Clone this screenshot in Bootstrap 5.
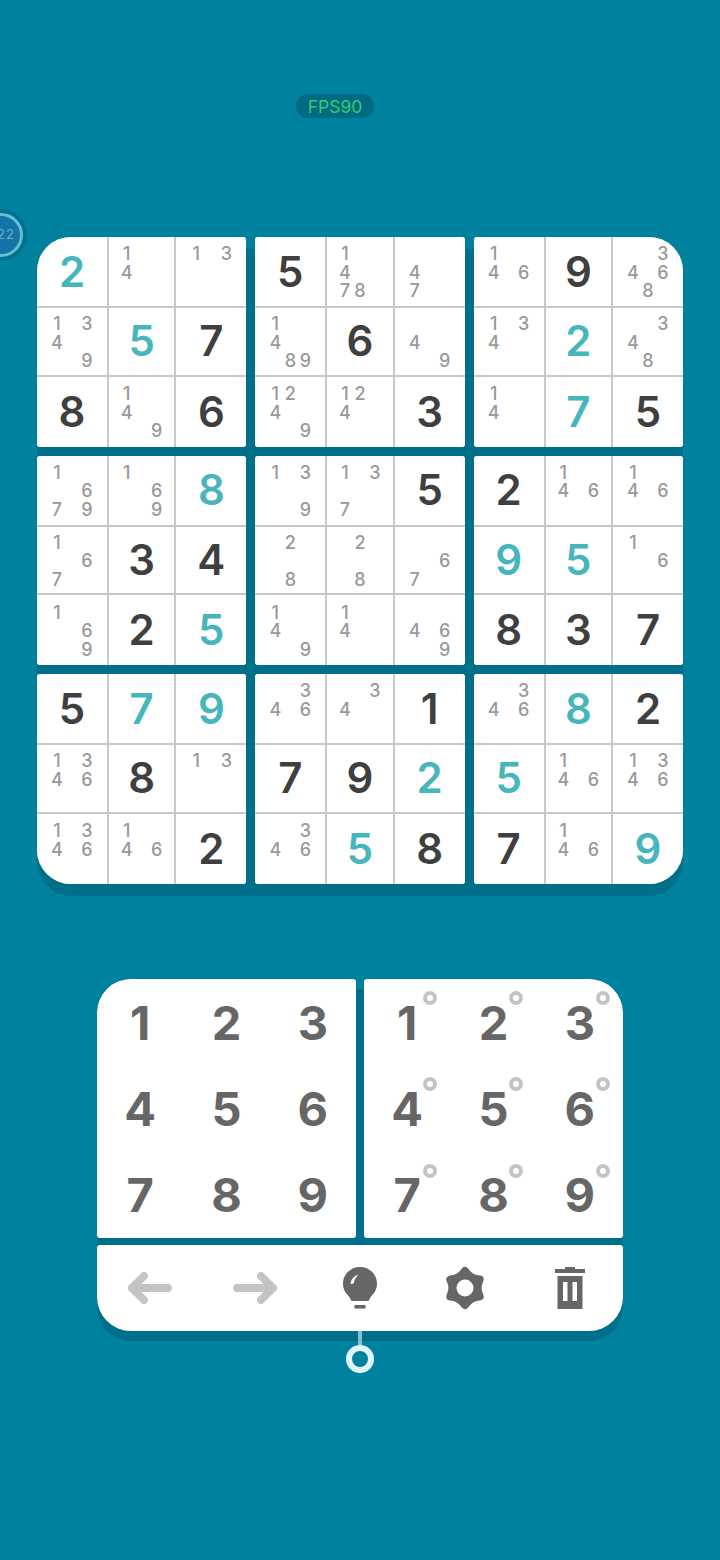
<!DOCTYPE html>
<html lang="en">
<head>
    <meta charset="UTF-8">
    <meta name="viewport" content="width=device-width, initial-scale=1.0">
    <title>Sudoku</title>
    <link href="https://cdn.jsdelivr.net/npm/bootstrap@5.3.0/dist/css/bootstrap.min.css" rel="stylesheet">
    <style>
        body { background: #00829f; font-family: Inter, "Liberation Sans", sans-serif; width: 720px; height: 1560px; overflow: hidden; }
        .fps-pill { margin: 94px 0 0 296px; width: 78px; height: 24px; border-radius: 12px; background: #006a83; color: #33cc6c; font-size: 17.5px; line-height: 26px; text-align: center; }
        .timer { left: -25px; top: 209px; width: 52px; height: 52px; border-radius: 50%; background: #00728d; }
        .timer-in { width: 44px; height: 44px; padding-left: 10px; border-radius: 50%; background: #1474a8; border: 3px solid #69bcd6; color: #6cb0cc; font-size: 13px; letter-spacing: 1px; }
        .board-wrap { margin: 119px 37px 0; }
        .under { position: absolute; left: 0; right: 0; top: 12px; bottom: -12px; background: #00708a; border-radius: 34px; }
        .sudoku { display: grid; grid-template-columns: repeat(3, 1fr); gap: 9px; }
        .house { display: grid; grid-template-columns: 70px 1fr 70px; grid-template-rows: 69px 1fr 70px; height: 209.5px; gap: 2px; background: #c8c8c8; border-radius: 3px; overflow: hidden; }
        .house.tl { border-top-left-radius: 34px; }
        .house.tr { border-top-right-radius: 34px; }
        .house.bl { border-bottom-left-radius: 34px; }
        .house.br { border-bottom-right-radius: 34px; }
        .cell { background: #fff; color: #3f3f3f; font-size: 42px; font-weight: 600; line-height: 1; }
        .cell.given { color: #47b6bc; }
        .notes { display: grid; grid-template-columns: repeat(3, 15px); grid-template-rows: repeat(3, 18.5px); padding-top: 3px; color: #999; font-size: 18px; font-weight: 500; line-height: 18.5px; text-align: center; }
        .pad-wrap { width: 526px; margin: 95.5px auto 0; }
        .pad-wrap .under { top: 10px; bottom: -10px; }
        .pads { display: flex; gap: 8px; }
        .pad { flex: 1; height: 259px; display: grid; grid-template-columns: repeat(3, 1fr); grid-template-rows: repeat(3, 1fr); background: #fff; border-radius: 3px; color: #666; font-size: 47px; font-weight: 700; line-height: 1; }
        .pad.left { border-top-left-radius: 34px; }
        .pad.right { border-top-right-radius: 34px; }
        .dot { position: absolute; left: calc(50% + 16px); top: calc(50% - 31px); width: 14px; height: 14px; border: 4px solid #c4c4c4; border-radius: 50%; }
        .tools { margin-top: 7px; height: 86px; background: #fff; border-radius: 3px 3px 34px 34px; }
        .tool { flex: 1 1 0; }
        .stem { width: 4px; height: 15px; background: #84c3d3; }
        .knob { width: 28px; height: 28px; border: 6px solid #e0f5f7; border-radius: 50%; margin-top: -1px; }
    </style>
</head>
<body>
<!-- Top badge and timer -->
<div class="fps-pill">FPS90</div>
<div class="timer position-absolute d-flex align-items-center justify-content-center">
    <div class="timer-in d-flex align-items-center justify-content-center">22</div>
</div>

<!-- Board -->
<div class="board-wrap position-relative">
    <div class="under"></div>
    <div class="sudoku position-relative" id="board"></div>
</div>

<!-- Number pads -->
<div class="pad-wrap position-relative">
    <div class="under"></div>
    <div class="position-relative">
        <div class="pads">
            <div class="pad left" id="pad-big"></div>
            <div class="pad right" id="pad-note"></div>
        </div>
        <div class="tools d-flex align-items-center">
            <div class="tool d-flex justify-content-center">
                <svg width="44" height="32" viewBox="0 0 44 32" fill="none" stroke="#c4c4c4" stroke-width="8" stroke-linecap="round" stroke-linejoin="round"><path d="M40 16H4M16 4 4 16l12 12"/></svg>
            </div>
            <div class="tool d-flex justify-content-center">
                <svg width="44" height="32" viewBox="0 0 44 32" fill="none" stroke="#c4c4c4" stroke-width="8" stroke-linecap="round" stroke-linejoin="round"><path d="M4 16h36M28 4l12 12-12 12"/></svg>
            </div>
            <div class="tool d-flex justify-content-center">
                <svg width="34" height="42" viewBox="0 0 34 42">
                    <path fill="#666" d="M17 0C7.500 0 0 7.500 0 16.500c0 6 3 10 6 13 1.500 2 2 3.500 2.500 4.500h17c.5-1 1-2.500 2.500-4.500 3-3 6-7 6-13C34 7.500 26.500 0 17 0z"/>
                    <rect x="11.500" y="38" width="11" height="3.500" fill="#666"/>
                    <path fill="#fff" d="M7.500 17c.5-4.500 3-8 8-9.500-2 2.500-4 4.500-5 9z"/>
                </svg>
            </div>
            <div class="tool d-flex justify-content-center">
                <svg width="40" height="44" viewBox="0 0 40 44">
                    <path fill="#666" stroke="#666" stroke-width="8" stroke-linejoin="round" d="M20 5Q25.250 12.900 34.700 13.500 30.500 22 34.700 30.500 25.250 31.100 20 39 14.750 31.100 5.300 30.500 9.500 22 5.300 13.500 14.750 12.900 20 5z"/>
                    <circle cx="20" cy="22" r="8.500" fill="#fff"/>
                </svg>
            </div>
            <div class="tool d-flex justify-content-center">
                <svg width="30" height="42" viewBox="0 0 30 42">
                    <path fill="#666" fill-rule="evenodd" d="M10 0h10v2h10v4H0V2h10zM2.500 9h25v33h-25zM8 15v19h4.500V15zM17.500 15v19H22V15z"/>
                </svg>
            </div>
        </div>
    </div>
</div>

<!-- Hint connector -->
<div class="d-flex flex-column align-items-center position-relative">
    <div class="stem"></div>
    <div class="knob"></div>
</div>

<script src="https://cdn.jsdelivr.net/npm/bootstrap@5.3.0/dist/js/bootstrap.bundle.min.js"></script>
<script>
    // one string per cell: "5" solved, "t5" player entered (teal), "n146" pencil notes
    var rows = [
        't2 n14 n13 5 n1478 n47 n146 9 n3468',
        'n1349 t5 7 n1489 6 n49 n134 t2 n348',
        '8 n149 6 n1249 n124 3 n14 t7 5',
        'n1679 n169 t8 n139 n137 5 2 n146 n146',
        'n167 3 4 n28 n28 n67 t9 t5 n16',
        'n169 2 t5 n149 n14 n469 8 3 7',
        '5 t7 t9 n346 n34 1 n346 t8 2',
        'n1346 8 n13 7 9 t2 t5 n146 n1346',
        'n1346 n146 2 n346 t5 8 7 n146 t9'
    ].map(function (r) { return r.split(' '); });

    function cellHtml(v) {
        if (v[0] === 'n') {
            var notes = '';
            for (var d = 1; d <= 9; d++) {
                notes += '<span>' + (v.indexOf(d) > 0 ? d : '') + '</span>';
            }
            return '<div class="cell d-flex align-items-center justify-content-center"><div class="notes">' + notes + '</div></div>';
        }
        var given = v[0] === 't';
        return '<div class="cell d-flex align-items-center justify-content-center' + (given ? ' given' : '') + '">' + (given ? v[1] : v) + '</div>';
    }

    var corners = { 0: ' tl', 2: ' tr', 6: ' bl', 8: ' br' };
    var html = '';
    for (var b = 0; b < 9; b++) {
        html += '<div class="house' + (corners[b] || '') + '">';
        for (var i = 0; i < 9; i++) {
            var r = Math.floor(b / 3) * 3 + Math.floor(i / 3);
            var c = (b % 3) * 3 + i % 3;
            html += cellHtml(rows[r][c]);
        }
        html += '</div>';
    }
    document.getElementById('board').innerHTML = html;

    var big = '', note = '';
    for (var n = 1; n <= 9; n++) {
        big += '<div class="d-flex align-items-center justify-content-center">' + n + '</div>';
        note += '<div class="d-flex align-items-center justify-content-center position-relative">' + n + '<span class="dot"></span></div>';
    }
    document.getElementById('pad-big').innerHTML = big;
    document.getElementById('pad-note').innerHTML = note;
</script>
</body>
</html>
